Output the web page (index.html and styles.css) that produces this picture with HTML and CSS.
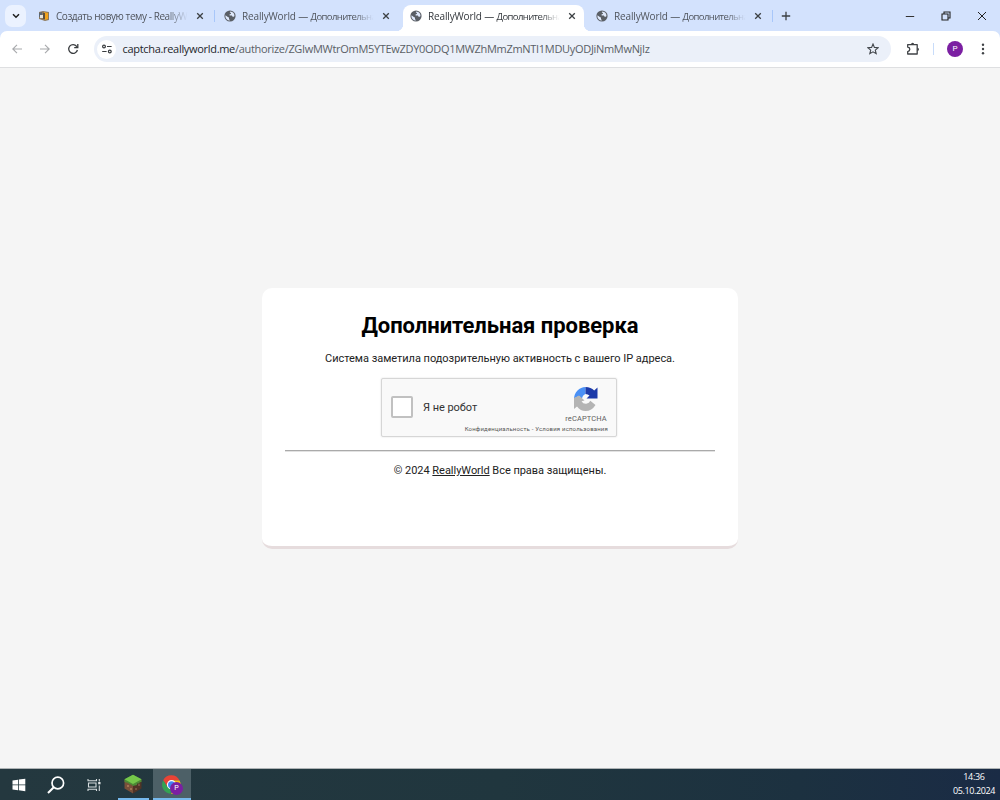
FILE: index.html
```html
<!DOCTYPE html>
<html lang="ru">
<head>
<meta charset="utf-8">
<title>ReallyWorld — Дополнительная проверка</title>
<link rel="stylesheet" href="styles.css">
</head>
<body>
<svg class="defs" width="0" height="0">
  <symbol id="globe" viewBox="0 0 12 12"><circle cx="6" cy="6" r="5.6" fill="#5a5f66"/><path d="M1.4 5.2 L4.2 7.2 L5 7.4 L5 9 L6 10.5 A4.6 4.6 0 0 1 1.4 5.2Z M6.2 1.5 A4.6 4.6 0 0 1 10.5 6 Q9.4 7.3 8.4 6.6 L7.9 5.6 L5.7 5.4 L5.5 4.4 L7 3.8 L7 2.9 L5.8 2.6Z" fill="#dfe9fc"/></symbol>
  <symbol id="close" viewBox="0 0 8 8"><path d="M1.2 1.2 L6.8 6.8 M6.8 1.2 L1.2 6.8" stroke="#3c4043" stroke-width="1.3"/></symbol>
</svg>
<div class="browser-chrome">
<header class="tabstrip">
  <button class="tab-search"><svg width="8" height="6" viewBox="0 0 8 6"><path d="M1 1.2 L4 4.2 L7 1.2" fill="none" stroke="#1f1f1f" stroke-width="1.5"/></svg></button>
  <div class="tab divided">
    <svg class="favicon" viewBox="0 0 12 12"><path d="M1 2 L5 1 L11 2 L11 10 L7 11 L1 9Z" fill="#8d7a5d"/><path d="M1 3 L4 2 V6 L1 7Z" fill="#596675"/><path d="M2 5 H5 V8 H2Z" fill="#e6e4dc"/><path d="M6 2 L10 3 V9 L7 10Z" fill="#f2a31b"/><path d="M5 3 H7 V9 H5Z" fill="#5b5040"/></svg>
    <span class="title">Создать новую тему - ReallyWo</span>
    <svg class="close"><use href="#close"/></svg>
  </div>
  <div class="tab">
    <svg class="favicon"><use href="#globe"/></svg><span class="title"><span class="site">ReallyWorld — </span><span class="topic">Дополнительна</span></span><svg class="close"><use href="#close"/></svg>
  </div>
  <div class="tab active">
    <svg class="favicon"><use href="#globe"/></svg><span class="title"><span class="site">ReallyWorld — </span><span class="topic">Дополнительна</span></span><svg class="close"><use href="#close"/></svg>
  </div>
  <div class="tab divided">
    <svg class="favicon"><use href="#globe"/></svg><span class="title"><span class="site">ReallyWorld — </span><span class="topic">Дополнительна</span></span><svg class="close"><use href="#close"/></svg>
  </div>
  <svg class="new-tab" viewBox="0 0 10 10"><path d="M5 .8 V9.2 M.8 5 H9.2" stroke="#3c4043" stroke-width="1.3"/></svg>
  <div class="window-controls">
    <svg width="10" height="10" viewBox="0 0 10 10"><path d="M.8 5.5 H9.2" stroke="#333" stroke-width="1"/></svg>
    <svg width="10" height="10" viewBox="0 0 10 10"><path d="M1 3 H7 V9 H1Z M3 3 V1 H9 V7 H7" fill="none" stroke="#222" stroke-width="1.1"/></svg>
    <svg width="10" height="10" viewBox="0 0 10 10"><path d="M1 1 L9 9 M9 1 L1 9" stroke="#222" stroke-width="1"/></svg>
  </div>
</header>
<nav class="toolbar">
  <div class="nav-buttons">
    <svg width="12" height="12" viewBox="0 0 12 12"><path d="M11 6 H2 M6 1.8 L1.8 6 L6 10.2" fill="none" stroke="#a7a9ac" stroke-width="1.1"/></svg>
    <svg width="12" height="12" viewBox="0 0 12 12"><path d="M1 6 H10 M6 1.8 L10.2 6 L6 10.2" fill="none" stroke="#a7a9ac" stroke-width="1.1"/></svg>
    <svg width="12" height="12" viewBox="0 0 12 12"><path d="M10.4 7 A4.4 4.4 0 1 1 9.6 3.3 L10.2 4" fill="none" stroke="#3a3d40" stroke-width="1.3"/><path d="M10.8 1 V4.6 H7.2" fill="none" stroke="#3a3d40" stroke-width="1.3"/></svg>
  </div>
  <div class="omnibox">
    <span class="site-info"><svg width="12" height="10" viewBox="0 0 12 10"><g fill="none" stroke="#3a3d40" stroke-width="1.2"><circle cx="3" cy="2.5" r="1.4"/><path d="M6 2.5 H10.6 M1.2 7.5 H5.6"/><circle cx="8.8" cy="7.5" r="1.4"/></g></svg></span>
    <span class="url"><span class="host">captcha.reallyworld.me</span>/authorize/ZGIwMWtrOmM5YTEwZDY0ODQ1MWZhMmZmNTI1MDUyODJiNmMwNjIz</span>
    <svg class="star" viewBox="0 0 12 12"><path d="M6 1 L7.4 4.4 L11.2 4.7 L8.3 7.1 L9.2 10.7 L6 8.8 L2.8 10.7 L3.7 7.1 L.8 4.7 L4.6 4.4Z" fill="none" stroke="#43474c" stroke-width="1.1"/></svg>
  </div>
  <svg class="puzzle" viewBox="0 0 14 14"><path d="M1.7 2.6 H11.2 V12 H1.7 V9.6 Q3.8 9.2 3.8 7.3 Q3.8 5.4 1.7 5Z" fill="none" stroke="#3f4246" stroke-width="1.3" stroke-linejoin="round"/><path d="M5 2.4 A1.6 1.6 0 0 1 8.2 2.4Z M11.4 5.7 A1.6 1.6 0 0 1 11.4 8.9Z" fill="#3f4246"/></svg>
  <span class="divider"></span>
  <span class="avatar">P</span>
  <svg class="menu" viewBox="0 0 4 12"><g fill="#3f4246"><circle cx="2" cy="1.7" r="1.2"/><circle cx="2" cy="6" r="1.2"/><circle cx="2" cy="10.3" r="1.2"/></g></svg>
</nav>
</div>
<main class="page">
  <section class="card">
    <h1>Дополнительная проверка</h1>
    <p class="notice">Система заметила подозрительную активность с вашего IP адреса.</p>
    <div class="captcha">
      <span class="checkbox"></span>
      <span class="robot">Я не робот</span>
      <div class="brand">
        <svg class="logo" viewBox="0 0 26 26"><path d="M1 12.5 A12 12 0 0 1 12.5 1 V8 Q9.5 9 9 12.5 L6 10Z" fill="#4a90f5"/><path d="M12.5 1 Q18 1 21.2 4.6 L24.5 1.5 V12.5 H13.5 L16.5 9.5 Q15 8 12.5 8Z" fill="#1c3aa9"/><path d="M1 12.5 V12 L6 9.5 L11.5 14.5 L8.5 15.2 Q10.5 18.5 14 17.6 Q16 17 17.3 14.7 L22.5 19 Q18.8 25 12.5 25 Q7.5 25 4 20.5 L1 23Z" fill="#b4b4b4"/></svg>
        <span class="brand-name">reCAPTCHA</span>
      </div>
      <span class="terms">Конфиденциальность - Условия использования</span>
    </div>
    <hr>
    <p class="copyright">© 2024 <a>ReallyWorld</a> Все права защищены.</p>
  </section>
</main>
<footer class="taskbar">
  <span class="task"><svg width="14" height="14" viewBox="0 0 14 14"><path d="M.5 2.5 L6 1.7 V6.6 H.5Z M6.8 1.6 L13.3.7 V6.6 H6.8Z M.5 7.3 H6 V12.2 L.5 11.4Z M6.8 7.3 H13.3 V13.2 L6.8 12.3Z" fill="#fff"/></svg></span>
  <span class="task"><svg width="18" height="18" viewBox="0 0 18 18"><circle cx="10.8" cy="7" r="5.8" fill="none" stroke="#fff" stroke-width="1.7"/><path d="M6.8 11.2 L1 17" stroke="#fff" stroke-width="2"/></svg></span>
  <span class="task"><svg width="14" height="14" viewBox="0 0 14 14"><g fill="none" stroke="#d6dcde" stroke-width="1.1"><path d="M1 1 V2.8 H9.5 V1 M1 13 V11.2 H9.5 V13 M1.5 5 H9 V9 H1.5Z M12.3 1 V3.6 M12.3 7.5 V13"/></g><path d="M11.2 4 H13.5 V6.3 H11.2Z" fill="#e6eaeb"/></svg></span>
  <span class="task running"><svg width="18" height="20" viewBox="0 0 18 20"><path d="M.5 5.5 L9 10 V19.5 L.5 14.5Z" fill="#79503a"/><path d="M17.5 5.5 L9 10 V19.5 L17.5 14.5Z" fill="#513426"/><path d="M9 .7 L17.5 5.3 V8 L15.5 8.2 V9.6 L13 9.6 V11 L9 12 L6.5 10 V10.8 L4 9 L.5 8 V5.3Z" fill="#4d8b36"/><path d="M9 .7 L17.5 5.3 L9 10 L.5 5.3Z" fill="#75c84a"/><path d="M3 11 h2v2h-2z M6 14 h2v2h-2z" fill="#a07353"/><path d="M11 14 h2v2h-2z M14 10 h2v2h-2z" fill="#765440"/></svg></span>
  <span class="task running current"><svg width="20" height="20" viewBox="0 0 20 20"><path d="M1.2 5.3 A9 9 0 0 1 17.5 5.5 H9.5 L5.5 12Z" fill="#e94335"/><path d="M1.2 5.3 L5.7 12.3 L9.7 13.5 L8.5 18.7 A9 9 0 0 1 1.2 5.3Z" fill="#34a353"/><path d="M9.5 5.5 H17.5 A9 9 0 0 1 9 18.8 L13 12Z" fill="#fbc116"/><circle cx="9.5" cy="9.7" r="4.6" fill="#fff"/><circle cx="9.5" cy="9.7" r="3.5" fill="#4285f4"/></svg><span class="badge">P</span></span>
  <div class="clock"><span>14:36</span><span class="date">05.10.2024</span></div>
</footer>
</body>
</html>
```
FILE: styles.css
```css
* { box-sizing: border-box; }
body { margin: 0; width: 1000px; height: 800px; overflow: hidden; display: flex; flex-direction: column; font-family: Roboto, sans-serif; background: #f5f5f5; }
svg { display: block; flex: none; }
.defs { position: absolute; }
.browser-chrome { flex: none; background: #d3e2fd; }
.tabstrip { height: 31px; display: flex; align-items: center; padding-left: 5px; font-family: "Open Sans", sans-serif; }
.tab-search { width: 21px; height: 22px; margin-right: 5px; padding: 0; border: 0; border-radius: 7px; background: #ebf2ff; display: flex; align-items: center; justify-content: center; }
.tab { position: relative; width: 186px; height: 31px; padding: 1px 0 0 7px; display: flex; align-items: center; }
.favicon { width: 12px; height: 12px; }
.title { width: 133px; margin-left: 6px; white-space: pre; color: #50555d; font-size: 10px; line-height: 16px; letter-spacing: -0.43px; -webkit-mask-image: linear-gradient(90deg, #000 84%, transparent 99%); mask-image: linear-gradient(90deg, #000 84%, transparent 99%); }
.site { letter-spacing: -0.15px; }
.topic { font-size: 9.5px; letter-spacing: -0.6px; }
.close { width: 8px; height: 8px; margin-left: 7px; }
.divided::after { content: ""; width: 1px; height: 12px; margin-left: 10px; background: #a8c7fa; }
.active::before { content: ""; position: absolute; left: 0; top: 5px; width: 181px; height: 26px; border-radius: 8px 8px 0 0; background: #fff; }
.active::after { content: ""; position: absolute; left: -7px; bottom: 0; width: 195px; height: 7px; background: radial-gradient(circle at 0 0, transparent 7px, #fff 7.5px) left / 7px 7px no-repeat, radial-gradient(circle at 100% 0, transparent 7px, #fff 7.5px) right / 7px 7px no-repeat; }
.active > * { position: relative; }
.active .title { color: #33373c; }
.new-tab { width: 10px; height: 10px; margin-left: 6px; }
.window-controls { margin-left: auto; padding-right: 13px; display: flex; gap: 26px; }
.toolbar { height: 37px; display: flex; align-items: center; padding-left: 11px; background: #fff; border-bottom: 1px solid #dedfe1; border-radius: 7px 7px 0 0; }
.nav-buttons { display: flex; gap: 16px; }
.omnibox { width: 797px; height: 26px; margin-left: 15px; padding: 0 12px 0 3px; display: flex; align-items: center; border-radius: 13px; background: #ebf0f9; }
.site-info { width: 19px; height: 19px; border-radius: 50%; background: #fff; display: flex; align-items: center; justify-content: center; }
.url { margin-left: 6.5px; padding-bottom: 1px; color: #5a5f66; font-family: "Open Sans", sans-serif; font-size: 11px; letter-spacing: -0.31px; white-space: nowrap; }
.host { color: #24272b; }
.star { width: 12px; height: 12px; margin-left: auto; }
.puzzle { width: 14px; height: 14px; margin-left: 15px; }
.divider { width: 1px; height: 12px; margin-left: 13px; background: #c8dcfa; }
.avatar { width: 16px; height: 16px; margin-left: 13px; border-radius: 50%; background: #7b1fa2; color: #fff; font-size: 8px; line-height: 16px; text-align: center; }
.menu { width: 4px; height: 12px; margin-left: 18px; }
.page { flex: 1; display: flex; justify-content: center; align-items: flex-start; padding-top: 220px; }
.card { width: 476px; height: 261px; padding: 24px 23px 0; display: flex; flex-direction: column; align-items: center; border-radius: 10px; border-bottom: 3px solid #e6dcdd; background: #fff; color: #222; }
h1 { margin: 0; color: #000; font-size: 22px; line-height: 28px; font-weight: 700; letter-spacing: -0.05px; white-space: nowrap; }
.notice { margin: 10px 0 0; font-size: 11px; line-height: 18px; letter-spacing: -0.03px; white-space: nowrap; }
.captcha { width: 236px; height: 59px; margin: 10px 2px 0 0; border: 1px solid #d6d6d6; border-radius: 2px; background: #f9f9f9; box-shadow: 0 0 2px #ddd; display: grid; grid-template-columns: 41px 1fr 60px; grid-template-rows: 45px 10px; align-items: center; }
.checkbox { width: 22px; height: 22px; margin: 10px 0 0 9px; border: 2px solid #c1c1c1; border-radius: 2px; background: #fff; }
.robot { padding-top: 12px; color: #333; font-size: 11px; letter-spacing: -0.05px; white-space: nowrap; }
.brand { display: flex; flex-direction: column; align-items: center; padding-top: 8px; }
.logo { width: 26px; height: 26px; }
.brand-name { color: #606060; font-size: 7.5px; line-height: 13px; letter-spacing: 0.12px; }
.terms { grid-column: 1 / -1; justify-self: end; padding-right: 8px; color: #555; font-size: 6px; line-height: 10px; letter-spacing: 0.19px; white-space: nowrap; }
hr { width: 430px; height: 2px; margin: 13px 0 0; border: 0; border-top: 1px solid #aaa; border-bottom: 1px solid #e2e2e2; }
.copyright { margin: 10px 0 0; font-size: 11px; line-height: 18px; letter-spacing: -0.03px; white-space: nowrap; }
.copyright a { text-decoration: underline; }
.taskbar { height: 32px; flex: none; display: flex; border-top: 1px solid #aeb3b5; background: linear-gradient(90deg, #24383f 0%, #20363e 50%, #1c3140 80%, #1a2b45 100%); }
.task { position: relative; width: 37.5px; display: flex; align-items: center; justify-content: center; }
.task.running { width: 38px; margin-left: 1.5px; padding-bottom: 1px; }
.running::after { content: ""; position: absolute; left: 4px; right: 3px; bottom: 0; height: 2px; background: #76b9ed; }
.task.current { margin-left: 1px; background: #4d6067; padding: 1px 0 0; }
.task.current::after { left: 0; right: 0; }
.badge { position: absolute; left: 17px; top: 13px; width: 13px; height: 13px; border-radius: 50%; background: #7b1fa2; color: #fff; font-size: 7px; line-height: 13px; text-align: center; }
.clock { width: 52px; margin-left: auto; display: flex; flex-direction: column; align-items: center; padding-top: 1px; color: #fff; font-family: "Open Sans", sans-serif; font-size: 9px; line-height: 14px; letter-spacing: -0.3px; }
.date { letter-spacing: -0.4px; }
```
